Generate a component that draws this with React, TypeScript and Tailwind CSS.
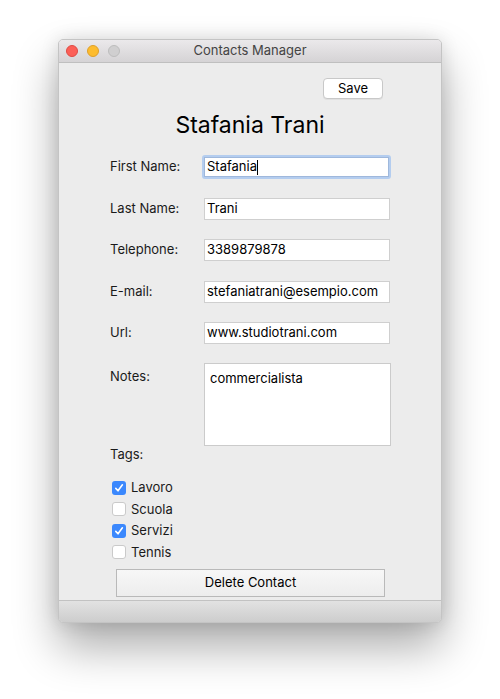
import React from "react";

const font = { fontFamily: 'Inter, "Liberation Sans", Arial, sans-serif' };

function Field({ label, value, focused }: { label: string; value: string; focused?: boolean }) {
  return (
    <div className="flex items-center h-[22px]">
      <div className="w-[94px] text-[13px] text-[#1a1a1a]">{label}</div>
      {focused ? (
        <div className="w-[189px] h-[24px] -ml-[2px] rounded-[3px] border-[2px] border-[#b4cdef] bg-white flex items-center">
          <div className="w-full h-full border border-[#9fb8dc] flex items-center pl-[2px] text-[13px] text-black">
            Stafania<span className="inline-block w-[1px] h-[15px] bg-black"></span>
          </div>
        </div>
      ) : (
        <div className="w-[186px] h-[22px] border border-[#cfcfcf] bg-white flex items-center pl-[2px] text-[13px] text-black">
          {value}
        </div>
      )}
    </div>
  );
}

function Check({ label, checked }: { label: string; checked?: boolean }) {
  return (
    <div className="flex items-center h-[21.5px]">
      <div
        className={
          checked
            ? "w-[14px] h-[14px] rounded-[3px] bg-[#3b88fd] flex items-center justify-center"
            : "w-[14px] h-[14px] rounded-[3px] bg-white border border-[#cacaca]"
        }
      >
        {checked && (
          <svg width="10" height="10" viewBox="0 0 10 10">
            <path d="M1.8 5.4 L4 7.8 L8.4 1.8" stroke="white" strokeWidth="1.6" fill="none" strokeLinecap="round" strokeLinejoin="round" />
          </svg>
        )}
      </div>
      <span className="ml-[5px] text-[13px] text-[#1a1a1a]">{label}</span>
    </div>
  );
}

export default function App() {
  return (
    <div className="w-[500px] h-[699px] bg-white overflow-hidden" style={font}>
      <div className="ml-[58px] pt-[39px]">
        <div className="w-[384px] h-[584px] rounded-[5px] overflow-hidden border border-[#c4c4c4] shadow-[0_24px_45px_rgba(0,0,0,0.33),0_0_18px_rgba(0,0,0,0.12)] flex flex-col bg-[#ececec]">
          {/* Title bar */}
          <div className="relative h-[23px] bg-gradient-to-b from-[#ebe9eb] to-[#d5d3d5] border-b border-[#bfbfbf] flex items-center justify-center">
            <div className="absolute left-[7px] top-[5px] flex gap-[9px]">
              <div className="w-[12px] h-[12px] rounded-full bg-[#fc5f57] border border-[#df4a44]"></div>
              <div className="w-[12px] h-[12px] rounded-full bg-[#fdbc2e] border border-[#dfa02a]"></div>
              <div className="w-[12px] h-[12px] rounded-full bg-[#d0cfd0] border border-[#bdbdbd]"></div>
            </div>
            <span className="text-[13px] text-[#444444]">Contacts Manager</span>
          </div>
          {/* Content */}
          <div className="flex-1 flex flex-col">
            <div className="flex justify-end pr-[58px] pt-[15px]">
              <div className="w-[60px] h-[21px] rounded-[4px] bg-white border border-[#c8c8c8] shadow-[0_1px_0_rgba(0,0,0,0.05)] flex items-center justify-center text-[13px] text-black">
                Save
              </div>
            </div>
            <div className="mt-[12px] text-center text-[23px] leading-[28px] text-black">Stafania Trani</div>
            <div className="pl-[51px] mt-[17px] flex flex-col">
              <Field label="First Name:" value="Stafania" focused />
              <div className="mt-[20px]"><Field label="Last Name:" value="Trani" /></div>
              <div className="mt-[19px]"><Field label="Telephone:" value="3389879878" /></div>
              <div className="mt-[20px]"><Field label="E-mail:" value="stefaniatrani@esempio.com" /></div>
              <div className="mt-[19px]"><Field label="Url:" value="www.studiotrani.com" /></div>
              <div className="mt-[19px] flex">
                <div className="w-[94px] pt-[4px] text-[13px] text-[#1a1a1a]">Notes:</div>
                <div className="w-[187px] h-[83px] border border-[#cbcbcb] bg-white pl-[5px] pt-[5px] text-[13px] text-black">
                  commercialista
                </div>
              </div>
              <div className="mt-0 text-[13px] leading-[16px] text-[#1a1a1a]">Tags:</div>
              <div className="mt-[15px] pl-[2px] flex flex-col">
                <Check label="Lavoro" checked />
                <Check label="Scuola" />
                <Check label="Servizi" checked />
                <Check label="Tennis" />
              </div>
            </div>
            <div className="pl-[57px] mt-[6px]">
              <div className="w-[269px] h-[28px] border border-[#b9b9b9] bg-gradient-to-b from-[#f7f7f7] to-[#ededed] flex items-center justify-center text-[13px] text-black">
                Delete Contact
              </div>
            </div>
          </div>
          {/* Footer */}
          <div className="h-[22px] border-t border-[#c2c2c2] bg-gradient-to-b from-[#e2e2e2] to-[#cdcdcd]"></div>
        </div>
      </div>
    </div>
  );
}
